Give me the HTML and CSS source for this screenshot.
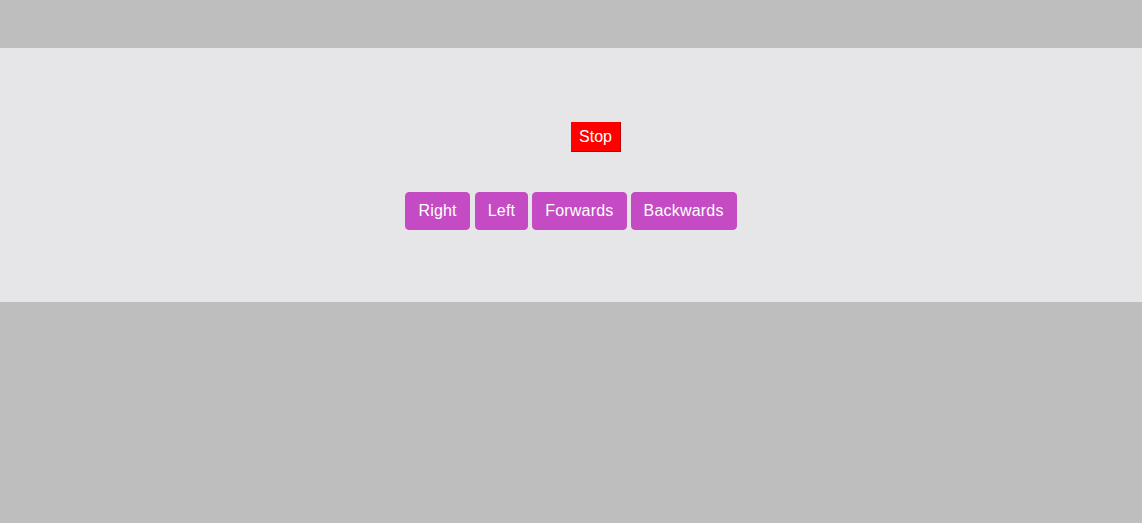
FILE: index.html
```html
<!DOCTYPE html>
<html>
<head>
<meta charset="utf-8">
<link rel="stylesheet" href="styles.css">
</head>
<body>
<div class="panel">
  <div class="stop-row"><button class="stop">Stop</button></div>
  <div class="controls">
    <button class="btn">Right</button>
    <button class="btn">Left</button>
    <button class="btn">Forwards</button>
    <button class="btn">Backwards</button>
  </div>
</div>
</body>
</html>
```
FILE: styles.css
```css
html, body {
  margin: 0;
  padding: 0;
  background: #bebebe;
  font-family: "Liberation Sans", Arial, sans-serif;
}
body {
  padding-top: 48px;
}
.panel {
  background: #e6e6e8;
  height: 254px;
  box-sizing: border-box;
  padding-top: 74px;
  display: flex;
  flex-direction: column;
  align-items: center;
}
.stop-row {
  display: flex;
  justify-content: center;
  padding-left: 50px;
}
.stop {
  background: #ff0000;
  color: #fff;
  font-family: inherit;
  font-size: 16px;
  line-height: 18px;
  height: 30px;
  width: 50px;
  padding: 0;
  border: none;
  border-right: 1px solid #c40000;
  border-bottom: 1px solid #c40000;
  box-sizing: border-box;
}
.controls {
  margin-top: 40px;
  display: flex;
  gap: 4px;
}
.btn {
  background: #c44bc4;
  color: #fff;
  font-family: inherit;
  font-size: 16px;
  letter-spacing: 0.2px;
  line-height: 24px;
  padding: 6px 12px;
  border: 1px solid #c44bc4;
  border-radius: 4px;
  height: 38px;
  box-sizing: border-box;
}
.btn:first-child {
  margin-right: 1px;
}
```
